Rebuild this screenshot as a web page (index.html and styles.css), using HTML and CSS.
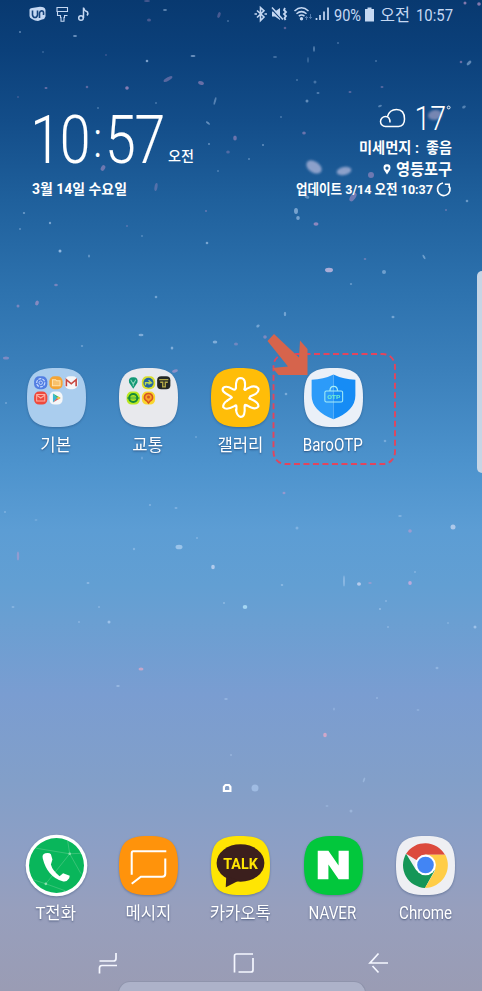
FILE: index.html
```html
<!DOCTYPE html>
<html lang="ko">
<head>
<meta charset="utf-8">
<title>홈 화면</title>
<link rel="stylesheet" href="styles.css">
</head>
<body>
<svg class="sky" id="sky" viewBox="0 0 482 991"></svg>
<header class="status">
  <svg class="status-left" width="62" height="18" viewBox="0 0 62 18" fill="none" stroke="#c5d8f2">
    <path d="M.5 3.500Q1 2 3 2L11 .8Q16 .8 16.500 4V10.500Q16 13 13 13.500L9 15Q6 15 3 13Q.5 12 .5 10Z" fill="#c5d8f2" stroke="none"/>
    <path d="M3.500 4.500V9Q4 11.500 6 11.500T8.500 9V4.500M10.500 12V7Q11 4.500 13.500 5Q15 5.500 14.500 9" stroke="#15437b" stroke-width="1.600"/>
    <path d="M28 1.500H38.500V5.500H28ZM28.500 5.500V9.500H31.500V11.500H32V15.300H35V11.500H35.500V9.500H38.500" stroke-width="1.100"/>
    <path d="M54.500 12V1.500Q55 4.500 58.500 6Q59.500 7.500 58 9.500" stroke-width="1.500"/><circle cx="52" cy="12" r="2.300" stroke-width="1.500"/>
  </svg>
  <svg class="status-right" width="76" height="18" viewBox="0 0 76 18" fill="none" stroke="#c5d8f2">
    <path d="M3 4.500L10 11 6.500 14.500V1.500L10 4.800 3 11.500M.5 8H3M10.500 8H13" stroke-width="1.600"/>
    <path d="M18 5.500H21L26 2V14L21 10.500H18Z" fill="#c5d8f2" stroke="none"/><path d="M17.500 3L28 14" stroke="#15437b" stroke-width="1.200"/><path d="M18 1.500L29 13.500" stroke-width="1.500"/>
    <path d="M31 2L30 4 32 6 30 8 32 10 30.500 12 31.500 14" stroke-width="1.800"/>
    <path d="M40.500 5Q47.500 -1.500 54.500 5M42.500 7.800Q47.500 3.500 52.500 7.800M44.800 10.200Q47.500 8 50.500 10.200" stroke-width="1.500"/><circle cx="47.500" cy="12.700" r="1.700" fill="#c5d8f2" stroke="none"/>
    <path d="M52.500 14V10.500M51 12L52.500 10.500 54 12M56.500 8V12.500M55 11L56.500 12.500 58 11" stroke="#5b82b4" stroke-width=".9"/>
    <path d="M62.500 12V14M66 9V14M70 5.500V14M74 1.500V14" stroke-width="1.700"/>
  </svg>
  <svg class="status-text" width="122" height="22" viewBox="0 0 122 22">
    <text x="1" y="17" textLength="27" lengthAdjust="spacingAndGlyphs">90%</text>
    <path d="M32 5H34.500V3.500H38.500V5H41V17.500H32Z" fill="#c5d8f2"/>
    <text class="kr" x="47" y="17" textLength="30" lengthAdjust="spacingAndGlyphs">오전</text>
    <text x="83" y="17" textLength="37" lengthAdjust="spacingAndGlyphs">10:57</text>
  </svg>
</header>

<section class="widgets">
  <div class="clock">
    <svg width="170" height="56" viewBox="0 0 170 56">
      <g class="thin" transform="scale(.84 1)">
        <text y="52" font-size="66" x="-2 33 73 87 122"><tspan>10</tspan><tspan dy="-6" class="colon">:</tspan><tspan dy="6">57</tspan></text>
      </g>
      <text class="ampm" x="136" y="49.500" textLength="26" lengthAdjust="spacingAndGlyphs">오전</text>
    </svg>
    <svg width="170" height="20" viewBox="0 0 170 20">
      <text class="bold" font-size="14" x="0" y="14" textLength="95" lengthAdjust="spacingAndGlyphs">3월 14일 수요일</text>
    </svg>
  </div>
  <div class="weather">
    <svg width="80" height="32" viewBox="0 0 80 32">
      <path d="M18 21.500Q18 15.500 13.500 15.500A5 5 0 0 0 13.500 25.500H26.500Q32.500 25 32.500 18C32.500 11.500 29 8.500 24.500 8.500Q17.500 8.500 15.500 15.500" fill="none" stroke="#fff" stroke-width="1.500"/>
      <g class="thin small" transform="translate(42 0) scale(.84 1)"><text y="29" font-size="34" x=".5 19.500">17</text></g>
      <circle cx="76.700" cy="6.500" r="1.400" fill="none" stroke="#fff" stroke-width=".9"/>
    </svg>
    <svg width="160" height="22" viewBox="0 0 160 22">
      <text class="bold" font-size="15" x="67" y="15" textLength="60" lengthAdjust="spacingAndGlyphs">미세먼지 :</text>
      <text class="bold" font-size="15" x="134" y="15" textLength="26" lengthAdjust="spacingAndGlyphs">좋음</text>
    </svg>
    <svg width="160" height="21" viewBox="0 0 160 21">
      <path fill-rule="evenodd" fill="#fff" d="M95 14.500L91.800 9.500Q90.500 4.200 95 4.200T98.200 9.500ZM95 6.500a1.600 1.600 0 1 0 .01 0Z"/>
      <text class="bold" font-size="16" x="104" y="15" textLength="56" lengthAdjust="spacingAndGlyphs">영등포구</text>
    </svg>
    <svg width="160" height="20" viewBox="0 0 160 20">
      <text class="bold" font-size="13.500" x="4" y="14" textLength="137" lengthAdjust="spacingAndGlyphs">업데이트 3/14 오전 10:37</text>
      <path d="M151 3A6.300 6.300 0 1 0 156.800 5.500M152.800 4.300H157.200V8" fill="none" stroke="#fff" stroke-width="1.600"/>
    </svg>
  </div>
</section>

<main class="apps">
  <div class="app">
    <svg class="icon" viewBox="0 0 58 58">
      <path fill="#aacdee" d="M0 29C0 7 7 0 29 0S58 7 58 29 51 58 29 58 0 51 0 29Z"/>
      <rect x="7" y="8" width="13" height="13" rx="5" fill="#527ee2"/><circle cx="13.500" cy="14.500" r="4" fill="none" stroke="#c4d8ff" stroke-width="1.200" stroke-dasharray="3 1"/><circle cx="13.500" cy="14.500" r="1.700" fill="none" stroke="#c4d8ff" stroke-width=".9"/>
      <rect x="22" y="8" width="13" height="13" rx="5" fill="#f4a536"/><path d="M25 11.500H28L29 12.500H32.500V17.500H25Z" fill="#f8c16c" stroke="#ffe3ae"/>
      <rect x="37" y="8" width="13" height="13" rx="5" fill="#f5f6f8"/><path d="M38.700 18V11.500L43.500 15.500 48.300 11.500V18" fill="none" stroke="#c5463f" stroke-width="1.600"/>
      <rect x="7" y="23" width="13" height="13" rx="5" fill="#ee493c"/><path d="M9.500 26H17.500V32.500H9.500ZM10 27L13.500 29.500 17 27" fill="none" stroke="#ffb0a3"/>
      <rect x="22" y="23" width="13" height="13" rx="5" fill="#f5f7f9"/><path d="M25.500 25V34L30 29.500Z" fill="#36b8d4"/><path d="M25.500 25L33 29.500H29.500Z" fill="#38b66b"/><path d="M25.500 34L33 29.500H29.500Z" fill="#e45a59"/><path d="M29 29.500L31 28 33 29.500 31 31Z" fill="#f4c443"/>
    </svg>
    <span class="label ko">기본</span>
  </div>
  <div class="app">
    <svg class="icon" viewBox="0 0 58 58">
      <path fill="#e8e9ed" d="M0 29C0 7 7 0 29 0S58 7 58 29 51 58 29 58 0 51 0 29Z"/>
      <path d="M14 20.500L10 14.500Q8.500 9 14 9T18 14.500Z" fill="#119775"/><path d="M11.500 11.500L14 16 16.500 11.500M14 14V18" fill="none" stroke="#8fd7bb"/>
      <rect x="22.500" y="8" width="13" height="13" rx="5" fill="#d8df2c"/><circle cx="29" cy="14.500" r="5" fill="#2464a3"/><path d="M26 17V14.500H31M29 12L32 14.500 29 16" fill="none" stroke="#b8d951" stroke-width="1.300"/>
      <rect x="37.500" y="8" width="13" height="13" rx="4" fill="#232725"/><path d="M39.500 11.500H48.500M40.500 14H43V18.500H45.500V14H48" fill="none" stroke="#b5aa48" stroke-width="1.300"/>
      <rect x="7.500" y="23" width="13" height="13" rx="5" fill="#b9e820"/><circle cx="14" cy="29.500" r="4" fill="#b9e820" stroke="#168a38" stroke-width="2"/><path d="M8 29.500H20" stroke="#168a38"/><path d="M12 29.500H16" stroke="#74c53c" stroke-width="3"/>
      <rect x="22.500" y="23" width="13" height="13" rx="5" fill="#f9d62e"/><path d="M29 34.500L27.500 32.500Q24.500 31 25 28.500 25.500 25 29 25T33 28.500Q33.500 31 30.500 32.500Z" fill="#f6a428" stroke="#d65320" stroke-width="1.500"/><circle cx="29" cy="28.500" r="1.500" fill="#d65320"/>
    </svg>
    <span class="label ko">교통</span>
  </div>
  <div class="app">
    <svg class="icon" viewBox="0 0 58 58">
      <path fill="#ffbd08" d="M0 29C0 7 7 0 29 0S58 7 58 29 51 58 29 58 0 51 0 29Z"/>
      <g fill="none" stroke="#fff" stroke-width="2.100" stroke-linecap="round">
        <path d="M24.500 19.500Q24 10 29 9.800Q35 10 33 21"/>
        <path d="M33 21Q33.500 22.500 35 20.500L40 18.300Q44.500 17.500 46.500 20Q47.500 23 44 25.500L38.500 28"/>
        <path d="M38 29Q37 30 39 30.500Q47.500 34 46.500 38Q43.500 42 35 36.500"/>
        <path d="M34.500 37Q33 35 33 38Q34 48 29 48Q25.500 47.500 24.500 41"/>
        <path d="M25 41V37.500Q25 36 23 37.500Q15 42 12 38.500Q11.500 35 16 32"/>
        <path d="M16 32L20.500 29Q20.500 28 18 27Q9.500 23 12 19.500Q15 17 21 20.500Q24 22.500 24.500 19.500"/>
      </g>
    </svg>
    <span class="label ko">갤러리</span>
  </div>
  <div class="app">
    <svg class="icon" viewBox="0 0 58 58">
      <path fill="#eaf0f8" d="M0 29C0 7 7 0 29 0S58 7 58 29 51 58 29 58 0 51 0 29Z"/>
      <path d="M29 6.500Q39 11.500 50.500 11.500V27Q50.500 42 29 50.500Z" fill="#168cf5"/><path d="M29 6.500Q19 11.500 7.500 11.500V27Q7.500 42 29 50.500Z" fill="#2c9bf9"/>
      <rect x="20.500" y="22.500" width="17.500" height="11" rx="1.500" fill="none" stroke="#a6eef7"/><path d="M25.500 22.500Q25.500 18 29.200 18T33 22.500" fill="none" stroke="#a6eef7" stroke-width="1.200"/>
      <text class="otp" x="22.800" y="30.300" textLength="13" lengthAdjust="spacingAndGlyphs">OTP</text>
    </svg>
    <span class="label baro">BaroOTP</span>
  </div>
  <svg class="callout" viewBox="0 0 130 136">
    <rect x="3.500" y="22" width="121.500" height="110" rx="12" fill="none" stroke="#e2455d" stroke-width="1.900" stroke-dasharray="6 3.500"/>
    <path d="M4 2L-2.500 9 18 34.500 2.500 36 8.500 43H37.500V17L30 8.500 29 25.500Z" fill="#d6644c"/>
  </svg>
</main>

<div class="pager">
  <svg width="40" height="12" viewBox="0 0 40 12"><path fill="#fff" fill-rule="evenodd" d="M1.800 10V4.500L4 2H8.500L10.500 4.500V10ZM4 8H8.300V5.500L7.500 4H4.800L4 5.500Z"/><circle cx="34" cy="6" r="3.500" fill="#9fbbe2"/></svg>
</div>

<nav class="apps dock">
  <div class="app">
    <svg class="icon" viewBox="0 0 58 58">
      <circle cx="29" cy="29" r="30.300" fill="#fff"/><circle cx="29" cy="29" r="27" fill="#09b65b"/>
      <path d="M9 12L42 17.500 53 37M42 17.500L18.500 47 6 43M42 17.500L40 5M42 17.500L53 17M18.500 47L38 54" fill="none" stroke="#4cc682" stroke-width=".7"/><circle cx="42" cy="17.500" r="1.300" fill="#8be0ad"/><circle cx="18.500" cy="47" r="1.300" fill="#8be0ad"/>
      <path d="M18 17Q14.500 18 15.500 22Q20 40 35 44.500Q39 45.500 41.500 41.500L42 39L35.500 36.500L32 39.500Q25 34 23.500 28L25 23 23.500 18Q22 16 18 17Z" fill="#fff"/>
    </svg>
    <span class="label tphone">T전화</span>
  </div>
  <div class="app">
    <svg class="icon" viewBox="0 0 58 58">
      <path fill="#ff930b" d="M0 29C0 7 7 0 29 0S58 7 58 29 51 58 29 58 0 51 0 29Z"/>
      <path d="M46.500 15H14Q12.500 15 12.500 17V38M45.500 22V37Q45.500 40 42.500 40H21.500L12.500 47" fill="none" stroke="#fff" stroke-width="2"/>
    </svg>
    <span class="label ko">메시지</span>
  </div>
  <div class="app">
    <svg class="icon" viewBox="0 0 58 58">
      <path fill="#ffe503" d="M0 29C0 7 7 0 29 0S58 7 58 29 51 58 29 58 0 51 0 29Z"/>
      <ellipse cx="29" cy="26.500" rx="23.500" ry="18.500" fill="#3b1f1d"/><path d="M15 39L14.500 50.500 27 44Z" fill="#3b1f1d"/>
      <text class="talk" x="12" y="32" textLength="34" lengthAdjust="spacingAndGlyphs">TALK</text>
    </svg>
    <span class="label ko">카카오톡</span>
  </div>
  <div class="app">
    <svg class="icon" viewBox="0 0 58 58">
      <path fill="#02c73c" d="M0 29C0 7 7 0 29 0S58 7 58 29 51 58 29 58 0 51 0 29Z"/>
      <path d="M13.500 14.500H24L34 29V14.500H44V42.500H34L24 28V42.500H13.500Z" fill="#fff"/>
    </svg>
    <span class="label naver">NAVER</span>
  </div>
  <div class="app">
    <svg class="icon" viewBox="0 0 58 58">
      <path fill="#eeeff3" d="M0 29C0 7 7 0 29 0S58 7 58 29 51 58 29 58 0 51 0 29Z"/>
      <path d="M29 29L9.900 17.500A22.300 22.300 0 0 1 48.200 18.500H29Z" fill="#dc4a3d"/>
      <path d="M29 29L38 34 28.500 51A22.300 22.300 0 0 1 9.900 17.500L20 34Z" fill="#159657"/>
      <path d="M29 18.500H48.500A22.300 22.300 0 0 1 28.500 51L38.500 34Z" fill="#ffcd47"/>
      <circle cx="29" cy="28.500" r="10.200" fill="#fff"/><circle cx="29" cy="28.500" r="8.200" fill="#4285f4"/>
    </svg>
    <span class="label chrome">Chrome</span>
  </div>
</nav>

<footer class="navbar">
  <svg viewBox="0 0 22 22"><path d="M1.500 9H15.500Q18 9 18 6.500V1M1.500 21.500V16Q1.500 13.500 4 13.500H19"/></svg>
  <svg viewBox="0 0 22 22"><path d="M1.500 20.500V4Q1.500 2 3.500 2H20M20 6V18Q20 20 18 20H5.500"/></svg>
  <svg viewBox="0 0 22 22"><path d="M20 11H2L10.500 1.500M4.500 14L10.500 20.500"/></svg>
</footer>
<div class="edge"></div>
<div class="sheet"></div>
<script src="stars.js"></script>
</body>
</html>
```

FILE: styles.css
```css
* { box-sizing: border-box; }
body {
  margin: 0;
  width: 482px;
  height: 991px;
  position: relative;
  overflow: hidden;
  display: flex;
  flex-direction: column;
  color: #fff;
  font-family: Roboto, "Noto Sans CJK KR", sans-serif;
  background: linear-gradient(#083970 0, #0b407a 50px, #134d89 120px, #1f609c 200px, #2d72ae 290px, #3b80bb 370px, #4d93cd 465px, #5c9dd4 530px, #629fd3 585px, #6a9fd2 620px, #7a9dd1 695px, #829fc9 780px, #8d9fc5 850px, #979fbd 910px, #9a9cb4 991px);
}
svg { display: block; overflow: visible; }
.sky { position: absolute; inset: 0; width: 482px; height: 991px; }
.galaxy { filter: blur(1.200px); }
.status, .widgets, .apps, .pager, .navbar { position: relative; }

.status { height: 30px; display: flex; align-items: flex-start; padding: 6px 0 0 29px; }
.status-right { margin: 0 0 0 163px; }
.status-text { margin-left: 3px; margin-top: -2px; }
.status-text text { font-size: 17px; fill: #c5d8f2; }
.status-text .kr { font-family: "Noto Sans CJK KR", sans-serif; font-size: 16.500px; }

.widgets { height: 338px; display: flex; justify-content: space-between; padding: 71px 30px 0 32px; }
.clock { display: flex; flex-direction: column; gap: 13px; padding-top: 10px; }
.weather { display: flex; flex-direction: column; align-items: flex-end; }
.weather svg:first-child { margin-bottom: 5px; }
.weather svg:nth-child(4) { margin-top: -1px; }
.widgets text { fill: #fff; }
.thin { font-family: Roboto, sans-serif; font-weight: 300; stroke: #fff; stroke-width: .1px; }
.thin.small { stroke: none; }
.colon { font-size: 50px; }
.ampm { font-family: "Noto Sans CJK KR", sans-serif; font-size: 14px; font-weight: 500; }
.bold { font-family: Roboto, "Noto Sans CJK KR", sans-serif; font-weight: 700; }

.apps { height: 102px; padding: 0 10px; display: grid; grid-template-columns: repeat(5, 92.400px); }
.app { display: flex; flex-direction: column; align-items: center; }
.icon { width: 59px; height: 59px; filter: drop-shadow(0 1px 1px rgba(20, 50, 90, .35)); }
.label { margin: 6px 1px 0 0; font-size: 18px; line-height: 24px; white-space: nowrap; text-shadow: 0 1px 2px rgba(20, 40, 80, .6); transform: scaleX(.84); }
.label.ko, .label.tphone { font-size: 17px; transform: scaleX(.98); }
.otp { font: 700 6px Roboto, sans-serif; fill: #6ff0d0; }
.talk { font: 700 15px Roboto, sans-serif; fill: #ffe503; }
.callout { position: absolute; left: 270px; top: -36px; width: 130px; height: 136px; }

.pager { margin-top: 312px; height: 12px; padding-left: 221px; }
.dock { margin-top: 42px; }
.navbar { margin-top: 14px; display: flex; gap: 113px; padding-left: 98px; }
.navbar svg { width: 22px; height: 22px; fill: none; stroke: #f5f7ff; stroke-width: 1.700; }
.edge { position: absolute; right: 0; top: 271px; width: 5px; height: 202px; border-radius: 5px 0 0 5px; background: #c6d5e5; }
.sheet { position: absolute; left: 118px; top: 981px; width: 248px; height: 12px; border: 1px solid #8f94ac; border-radius: 13px 13px 0 0; background: #adb2c9; }
```

FILE: stars.js
```js
// Each star: x, y, horizontal radius, vertical radius, opacity, rotation, tint.
const P = '#c99bcf', W = '#b9d5f5';
const stars = [
  [20,32,1,1,.6,0,W],[75,36,2,1,.7,0,W],[43,52,1,1,.3,0,W],[147,61,1.3,1.3,.8,0,W],[193,56,2.5,1,.7,0,W],
  [106,55,1,1,.3,0,P],[165,10,2,1,.6,0,W],[149,20,2,1.500,.4,0,P],[147,1,3,1,.4,0,P],[219,15,1.500,3,.4,20,P],[228,21,1,1,.4,0,W],
  [46,88,1.500,1,.6,0,P],[87,87,1.300,1.300,.5,0,P],[127,88,1.800,1.800,.8,0,P],[168,79,5,1.800,.5,-30,P],[201,83,3,1.800,.6,20,P],
  [215,101,1,4,.5,15,W],[208,123,2.500,1,.6,40,W],[235,138,1.800,2.500,.6,0,P],[209,144,1,1,.6,0,W],[228,152,1.800,1.500,.4,0,P],
  [103,168,2,3,.6,30,P],[156,187,1.500,4,.4,10,P],[18,97,1,1,.3,0,P],[98,108,1,1,.4,0,W],[156,103,1,1,.4,0,W],[218,171,1,1,.4,0,W],
  [285,28,1.300,1.300,.5,0,P],[314,49,1,3,.5,0,W],[338,43,1,1,.4,0,W],[275,57,2,1,.4,0,W],[308,60,1,3,.3,0,W],[376,61,1,1,.4,0,W],
  [461,62,1.300,1.300,.6,0,P],[469,63,3,1.500,.6,-45,W],[465,3,1.500,1.500,.8,0,P],[479,4,1.800,1.800,.8,0,P],
  [297,80,1,1,.4,0,W],[315,82,1.500,1.500,.4,0,W],[350,92,1.500,1,.5,0,P],[382,87,1.500,1,.5,0,P],[307,101,1.500,1.500,.6,0,W],[318,93,1.500,1,.5,0,W],
  [304,133,1.800,1.500,.6,0,P],[263,145,1,1,.6,0,W],[281,117,1,1,.4,0,W],[464,107,2,1.300,.5,-30,W],[249,159,1,1,.5,0,W],
  [314,167,8.500,5.500,1,34,'#a9b3d8'],[344,171,7.500,4,1,-12,'#a9b3d8'],[435,115,7,5,1,-10,'#8f95bd'],[371,175,3,3,.6,0,P],[353,197,2.500,5,.6,35,P],[307,197,2.500,1.500,.5,20,W],
  [380,106,2,1,.5,-20,W],[467,201,1.300,1.300,.6,0,W],[296,211,2,3,.7,0,W],[298,218,1.800,2,.7,0,W],[316,224,2.500,1.800,.8,0,P],
  [24,213,1.200,1,.6,0,W],[20,229,1,1,.5,0,W],[50,223,1.200,1.200,.7,0,W],[60,251,1.500,1.500,.9,0,W],[89,256,1,1.500,.5,0,W],[206,211,1,1,.5,0,P],[207,243,1.300,1.300,.7,0,W],
  [127,226,1,1,.4,0,P],[142,236,1,1,.4,0,W],[56,285,1.800,1.300,.6,0,P],[37,303,1.800,2.500,.7,20,P],[18,306,1.500,1.500,.6,0,P],[156,297,1.300,1.300,.6,0,W],
  [329,270,4,2.300,1,0,'#cbbbe1'],[365,259,1.300,1,.5,0,P],[384,272,2,2,.6,0,W],[424,257,1,2.500,.6,-30,W],[446,210,1,1,.5,0,P],[393,317,1.500,1.300,.6,0,W],[351,284,1.200,1,.5,0,W],
  [285,314,1.200,2.200,.6,0,W],[258,326,1.800,1.300,.6,-30,W],[265,337,1.800,1.800,.6,0,P],[141,335,2.500,1.300,.7,0,W],[172,348,1.300,1.500,.7,0,W],[215,342,2.300,1.500,.7,0,W],[236,344,2,1.500,.5,0,P],
  [82,346,1.200,1,.5,0,W],[6,358,3,1.500,.6,0,P],[175,371,3,1.500,.7,-15,P],[286,394,1.300,1.300,.6,0,W],[385,441,1.300,1.300,.5,0,W],[6,403,1,1,.5,0,W],[142,458,1,1.500,.4,0,W],[196,437,1,1,.4,0,W],
  [284,493,1.500,1.200,.7,0,P],[150,505,1.200,1,.5,0,W],[176,508,1.500,1,.5,0,W],[5,512,1,1,.5,0,W],[36,520,1.500,1,.3,0,W],[18,556,1.200,4.500,.6,0,P],[179,547,3.500,2.300,.8,0,'#bedaf5'],[134,549,1.200,1.200,.5,0,W],
  [213,567,1.800,2.300,.9,0,'#d1dcf5'],[197,538,1,1,.5,0,W],[245,607,2.300,2,.9,0,'#bcecff'],[224,603,1,1,.6,0,W],[297,528,1.500,1.500,.5,0,W],[453,527,2.500,2.500,.9,0,'#cddaf2'],[410,531,1.800,1.800,.7,0,P],[400,516,1.800,1,.5,0,W],
  [344,581,.8,5.500,.7,0,W],[359,584,2,1.800,.9,0,'#d6dcf5'],[370,583,1.800,1,.6,0,P],[410,583,1.800,2,.9,0,'#ddafdf'],[282,585,1.300,1,.6,0,W],[415,572,1,1,.5,0,W],[380,609,1.200,1,.6,0,W],[386,601,1,1,.5,0,W],
  [88,583,1.500,1,.6,0,W],[13,607,1.500,1,.5,0,W],[79,622,1,1,.5,0,W],[109,622,1.500,1.500,.8,0,W],[99,607,1,1,.5,0,W],[475,627,1.500,1.500,.8,0,W],[448,623,1,1,.4,0,W],[388,627,1,1,.5,0,W],
  [141,669,2.500,1.500,.8,0,'#efabc5'],[118,686,1.800,1,.6,0,W],[226,699,1.800,1,.5,0,W],[334,709,1,1.500,.4,0,W],[377,698,1,1,.5,0,W],[325,735,1.800,2.300,.9,0,'#f0abc8'],[437,668,1.500,1.200,.5,0,W],[418,710,1.500,1,.4,0,W],
  [231,755,1,1,.5,0,W],[364,780,1,2.500,.5,20,W],[351,811,1.500,1.500,.5,0,W],[327,806,1.500,1,.4,0,W]
];
document.getElementById('sky').innerHTML = stars.map(([x, y, rx, ry, o, r, c]) =>
  `<ellipse class="${rx > 6 ? 'galaxy' : 'star'}" cx="${x}" cy="${y}" rx="${rx}" ry="${ry}" fill="${c}" opacity="${(o * .8).toFixed(2)}" transform="rotate(${r} ${x} ${y})"/>`).join('');
```
